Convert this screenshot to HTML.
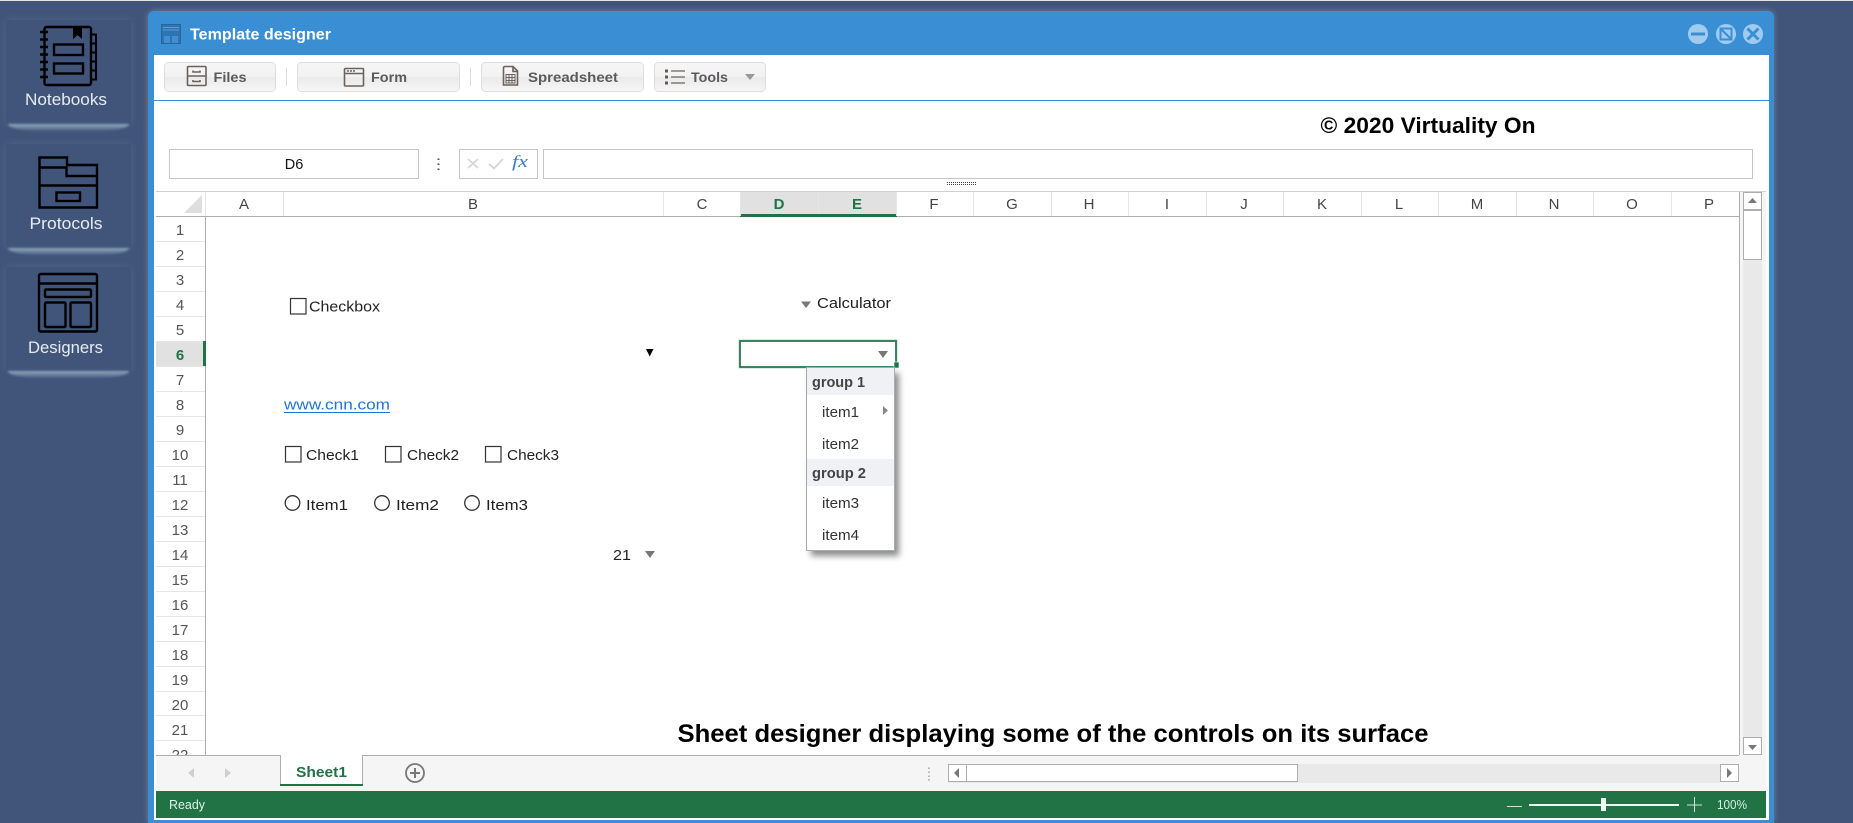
<!DOCTYPE html>
<html>
<head>
<meta charset="utf-8">
<title>Template designer</title>
<style>
html,body{margin:0;padding:0;width:1853px;height:823px;overflow:hidden;background:#41557b;font-family:"Liberation Sans",sans-serif}
.p{position:absolute;left:6px;width:125px;background:#41557b;box-shadow:0 0 8px rgba(190,210,225,.13)}
.g{position:absolute;left:8px;width:121px;height:7px;background:linear-gradient(#8eaabd,rgba(142,170,189,.1));border-radius:0 0 30px 30px/0 0 7px 7px;filter:blur(1px)}
.win{position:absolute;left:148px;top:11px;width:1626px;height:812px;background:#3a8fd4;border-radius:6px 6px 0 0;box-shadow:0 0 6px rgba(190,195,205,.4)}
.menu{position:absolute;left:807px;top:368px;width:88px;height:183px;box-shadow:4px 5px 6px rgba(0,0,0,.45)}
svg{position:absolute;left:0;top:0}
text{font-family:"Liberation Sans",sans-serif}
.side{font-size:16.5px;fill:#e6ebf0}
.col{font-size:15px;fill:#444;text-anchor:middle}
.row{font-size:15px;fill:#555;text-anchor:middle}
.btn{font-size:14px;font-weight:bold;fill:#5c5a5c}
.cell{font-size:15px;fill:#222}
.menuT{font-size:14.5px;fill:#333}
.menuG{font-size:14.5px;font-weight:bold;fill:#444}
.sep{fill:#e3e8e3}
.k{fill:none;stroke:#000;stroke-width:2.4}
.b{fill:none;stroke:#6b625c;stroke-width:1.6}
</style>
</head>
<body>
<div style="position:absolute;left:0;top:0;width:1853px;height:1px;background:#e4e4e4"></div>
<div class="p" style="top:20px;height:104px"></div>
<div class="g" style="top:124px"></div>
<div class="p" style="top:144px;height:104px"></div>
<div class="g" style="top:248px"></div>
<div class="p" style="top:267px;height:104px"></div>
<div class="g" style="top:371px"></div>
<div class="win"></div>
<svg width="1853" height="823" viewBox="0 0 1853 823" xmlns="http://www.w3.org/2000/svg">
<defs>
<linearGradient id="btn" x1="0" y1="0" x2="0" y2="1">
<stop offset="0" stop-color="#f6f6f6"/><stop offset=".5" stop-color="#f2f2f2"/><stop offset=".5" stop-color="#e9e9e9"/><stop offset="1" stop-color="#f7f7f7"/>
</linearGradient>
</defs>

<!-- sidebar icons -->
<g>
<rect class="k" x="44.500" y="27" width="46.500" height="58" rx="2"/>
<path d="M40 32h8M40 39.500h8M40 47h8M40 54.500h8M40 62h8M40 69.500h8M40 77h8" stroke="#000" stroke-width="2.600" fill="none"/>
<path d="M73 26h9v13l-4.500-4-4.500 4z" fill="#000"/>
<rect class="k" x="54" y="44.500" width="29" height="10.500"/>
<rect class="k" x="54" y="63.500" width="29" height="10"/>
<path d="M91 34.500h5v45h-5M91 43.500h5M91 52.500h5M91 61.500h5M91 70.500h5" fill="none" stroke="#000" stroke-width="2"/>
</g>
<g>
<path class="k" d="M39.500 157.500H67V165H97V207.500H39.500Z"/>
<path class="k" d="M39.500 167.500H66.500V176H97M39.500 185.500H97"/>
<rect class="k" x="56.500" y="192.500" width="23.500" height="8.500"/>
</g>
<g>
<rect class="k" x="39" y="274" width="58" height="57.500" rx="1.500"/>
<path class="k" d="M39 283.500H97"/>
<rect class="k" x="45" y="289.500" width="46" height="7.500" rx="1"/>
<rect class="k" x="45" y="302.500" width="20.500" height="24.500" rx="1"/>
<rect class="k" x="70.500" y="302.500" width="20.500" height="24.500" rx="1"/>
</g>
<text class="side" x="25" y="105" textLength="82" lengthAdjust="spacingAndGlyphs">Notebooks</text>
<text class="side" x="29.500" y="229" textLength="73" lengthAdjust="spacingAndGlyphs">Protocols</text>
<text class="side" x="28" y="353" textLength="75" lengthAdjust="spacingAndGlyphs">Designers</text>

<!-- window body -->
<rect x="154" y="55" width="1615" height="765" fill="#fff"/>

<!-- title -->
<rect x="161" y="24" width="20" height="20" fill="#2f74b2"/>
<rect x="161.500" y="24.500" width="19" height="19" fill="none" stroke="#2a659c"/>
<path d="M163 27.500h16M163 30h16" stroke="#5a9dd4" stroke-width="1"/>
<rect x="164" y="36" width="6" height="7" fill="#3f8fd2"/><rect x="172" y="36" width="6" height="7" fill="#3f8fd2"/>
<text x="190" y="39.500" font-size="16" font-weight="bold" fill="#fff" textLength="141" lengthAdjust="spacingAndGlyphs">Template designer</text>
<circle cx="1698" cy="34" r="10" fill="#a0cbef"/>
<rect x="1691" y="32.500" width="14" height="3" fill="#3a8fd4"/>
<circle cx="1726" cy="34" r="10" fill="#a0cbef"/>
<rect x="1720.500" y="28.500" width="11" height="11" fill="none" stroke="#3a8fd4" stroke-width="2"/>
<path d="M1720 28L1732 40" stroke="#3a8fd4" stroke-width="2"/>
<circle cx="1753" cy="34" r="10" fill="#a0cbef"/>
<path d="M1747.500 28.500L1758.500 39.500M1758.500 28.500L1747.500 39.500" stroke="#3a8fd4" stroke-width="3"/>

<!-- toolbar -->
<rect x="164.500" y="62.500" width="111" height="29" rx="4" fill="url(#btn)" stroke="#dedede"/>
<rect x="297.500" y="62.500" width="162" height="29" rx="4" fill="url(#btn)" stroke="#dedede"/>
<rect x="481.500" y="62.500" width="162" height="29" rx="4" fill="url(#btn)" stroke="#dedede"/>
<rect x="654.500" y="62.500" width="111" height="29" rx="4" fill="url(#btn)" stroke="#dedede"/>
<rect x="286" y="68" width="1" height="18" fill="#dcdcdc"/>
<rect x="470" y="68" width="1" height="18" fill="#dcdcdc"/>
<rect class="b" x="187.500" y="66.500" width="18.500" height="19" rx="1"/>
<path class="b" d="M187.500 76H206M193 70.500v1.500h7v-1.500M193 80v1.500h7V80"/>
<rect class="b" x="344.500" y="68.500" width="19" height="17.500" rx="1"/>
<path class="b" d="M344.500 73.500h19"/>
<path d="M347 71h2M350 71h2M353 71h2" stroke="#6b625c" stroke-width="1.500"/>
<path class="b" d="M503.500 68q0-1.500 1.500-1.500h8l4.500 4.500v14h-14z"/>
<path class="b" d="M513 66.500v5h4.500"/>
<path d="M506 74.500h9v8.500h-9zM506 77.500h9M506 80.500h9M509 74.500v8.500M512 74.500v8.500" fill="none" stroke="#6b625c" stroke-width="1"/>
<path d="M665 69.500h3v3h-3zM665 75.500h3v3h-3zM665 81.500h3v3h-3z" fill="#5f5c5a"/>
<path d="M671 71h14M671 77h14M671 83h14" stroke="#6b625c" stroke-width="1.300"/>
<text class="btn" x="213.500" y="82" textLength="33" lengthAdjust="spacingAndGlyphs">Files</text>
<text class="btn" x="371" y="82" textLength="36" lengthAdjust="spacingAndGlyphs">Form</text>
<text class="btn" x="528" y="82" textLength="90" lengthAdjust="spacingAndGlyphs">Spreadsheet</text>
<text class="btn" x="691" y="82" textLength="37" lengthAdjust="spacingAndGlyphs">Tools</text>
<path d="M745 74h10l-5 6z" fill="#999"/>
<rect x="154" y="100" width="1615" height="1" fill="#3a8fd4"/>

<!-- caption -->
<text x="1320.500" y="133" font-size="22" font-weight="bold" fill="#000" textLength="215" lengthAdjust="spacingAndGlyphs">© 2020 Virtuality On</text>

<!-- formula bar -->
<rect x="169.500" y="149.500" width="249" height="29" fill="#fff" stroke="#c6c6c6"/>
<text x="294" y="169" font-size="14.500" fill="#111" text-anchor="middle">D6</text>
<path d="M438.500 158.500v1.500M438.500 163.500v1.500M438.500 168.500v1.500" stroke="#555" stroke-width="2"/>
<rect x="459.500" y="149.500" width="78" height="29" fill="#fff" stroke="#c6c6c6"/>
<path d="M468 159L478 168M478 159L468 168" stroke="#d6d6d6" stroke-width="1.600"/>
<path d="M489 164L494 168.500L503 159" fill="none" stroke="#d6d6d6" stroke-width="1.800"/>
<text x="512" y="167" font-size="17" font-style="italic" fill="#3a80c8" style="font-family:'Liberation Serif',serif" textLength="16" lengthAdjust="spacingAndGlyphs">fx</text>
<rect x="543.500" y="149.500" width="1209" height="29" fill="#fff" stroke="#c6c6c6"/>
<path d="M947 182.500h29M947 184.500h29" stroke="#444" stroke-width="1" stroke-dasharray="1 1"/>

<!-- column headers -->
<rect x="156" y="191" width="1610" height="1" fill="#cfcfcf"/>
<rect x="740" y="192" width="157" height="23" fill="#e1e1e1"/>
<rect x="156" y="216" width="1583" height="1" fill="#adadad"/>
<rect x="740" y="214" width="157" height="3" fill="#217346"/>
<path d="M202 195V213H184Z" fill="#dedede"/>
<g class="sep">
<rect x="205" y="192" width="1" height="24"/><rect x="283" y="192" width="1" height="24"/><rect x="663" y="192" width="1" height="24"/><rect x="740" y="192" width="1" height="24"/><rect x="818" y="192" width="1" height="22"/><rect x="896" y="192" width="1" height="24"/><rect x="973" y="192" width="1" height="24"/><rect x="1051" y="192" width="1" height="24"/><rect x="1128" y="192" width="1" height="24"/><rect x="1206" y="192" width="1" height="24"/><rect x="1283" y="192" width="1" height="24"/><rect x="1361" y="192" width="1" height="24"/><rect x="1438" y="192" width="1" height="24"/><rect x="1516" y="192" width="1" height="24"/><rect x="1593" y="192" width="1" height="24"/><rect x="1671" y="192" width="1" height="24"/>
</g>
<text class="col" x="244" y="209">A</text><text class="col" x="473" y="209">B</text><text class="col" x="702" y="209">C</text>
<text class="col" x="779" y="209" style="fill:#217346;font-weight:bold">D</text><text class="col" x="857" y="209" style="fill:#217346;font-weight:bold">E</text>
<text class="col" x="934" y="209">F</text><text class="col" x="1012" y="209">G</text><text class="col" x="1089" y="209">H</text><text class="col" x="1167" y="209">I</text><text class="col" x="1244" y="209">J</text><text class="col" x="1322" y="209">K</text><text class="col" x="1399" y="209">L</text><text class="col" x="1477" y="209">M</text><text class="col" x="1554" y="209">N</text><text class="col" x="1632" y="209">O</text><text class="col" x="1709" y="209">P</text>

<!-- row headers -->
<rect x="156" y="341" width="49" height="25" fill="#e1e1e1"/>
<g class="sep">
<rect x="156" y="241" width="49" height="1"/><rect x="156" y="266" width="49" height="1"/><rect x="156" y="291" width="49" height="1"/><rect x="156" y="316" width="49" height="1"/><rect x="156" y="341" width="49" height="1"/><rect x="156" y="366" width="49" height="1"/><rect x="156" y="391" width="49" height="1"/><rect x="156" y="416" width="49" height="1"/><rect x="156" y="441" width="49" height="1"/><rect x="156" y="466" width="49" height="1"/><rect x="156" y="491" width="49" height="1"/><rect x="156" y="516" width="49" height="1"/><rect x="156" y="541" width="49" height="1"/><rect x="156" y="566" width="49" height="1"/><rect x="156" y="591" width="49" height="1"/><rect x="156" y="616" width="49" height="1"/><rect x="156" y="641" width="49" height="1"/><rect x="156" y="666" width="49" height="1"/><rect x="156" y="691" width="49" height="1"/><rect x="156" y="715" width="49" height="1"/><rect x="156" y="740" width="49" height="1"/>
</g>
<rect x="205" y="217" width="1" height="538" fill="#adadad"/>
<rect x="203" y="341" width="3" height="25" fill="#217346"/>
<text class="row" x="180" y="235">1</text><text class="row" x="180" y="260">2</text><text class="row" x="180" y="285">3</text><text class="row" x="180" y="310">4</text><text class="row" x="180" y="335">5</text>
<text class="row" x="180" y="360" style="fill:#217346;font-weight:bold">6</text>
<text class="row" x="180" y="385">7</text><text class="row" x="180" y="410">8</text><text class="row" x="180" y="435">9</text><text class="row" x="180" y="460">10</text><text class="row" x="180" y="485">11</text><text class="row" x="180" y="510">12</text><text class="row" x="180" y="535">13</text><text class="row" x="180" y="560">14</text><text class="row" x="180" y="585">15</text><text class="row" x="180" y="610">16</text><text class="row" x="180" y="635">17</text><text class="row" x="180" y="660">18</text><text class="row" x="180" y="685">19</text><text class="row" x="180" y="710">20</text><text class="row" x="180" y="735">21</text>
<svg x="156" y="741" width="49" height="14"><text class="row" x="24" y="19">22</text></svg>

<!-- vertical scrollbar -->
<rect x="1739" y="192" width="1" height="564" fill="#adadad"/>
<rect x="1740" y="192" width="26" height="563" fill="#f5f5f5"/>
<rect x="1743" y="192" width="19" height="563" fill="#e9e9e9"/>
<rect x="1743.500" y="192.500" width="18" height="17" fill="#fff" stroke="#adadad"/>
<path d="M1748 203h9l-4.500-5z" fill="#777"/>
<rect x="1743.500" y="210.500" width="18" height="49" fill="#fff" stroke="#adadad"/>
<rect x="1743.500" y="737.500" width="18" height="17" fill="#fff" stroke="#adadad"/>
<path d="M1748 745h9l-4.500 5z" fill="#777"/>

<!-- cell contents -->
<rect x="290.500" y="298.500" width="15.500" height="15.500" fill="#fff" stroke="#333" stroke-width="1.200"/>
<text class="cell" x="309" y="311.500" textLength="71" lengthAdjust="spacingAndGlyphs">Checkbox</text>
<path d="M801 301.500h10l-5 6.500z" fill="#777"/>
<text class="cell" x="817" y="308" textLength="74" lengthAdjust="spacingAndGlyphs">Calculator</text>
<path d="M646 349h7.500l-3.750 7.500z" fill="#000"/>

<text x="284" y="409.500" font-size="15" fill="#1f74d6" textLength="106" lengthAdjust="spacingAndGlyphs">www.cnn.com</text>
<rect x="284" y="412" width="106" height="1" fill="#1f74d6"/>

<rect x="285.500" y="446.500" width="15.500" height="15.500" fill="#fff" stroke="#333" stroke-width="1.200"/>
<text class="cell" x="306" y="460" textLength="53" lengthAdjust="spacingAndGlyphs">Check1</text>
<rect x="385.500" y="446.500" width="15.500" height="15.500" fill="#fff" stroke="#333" stroke-width="1.200"/>
<text class="cell" x="407" y="460" textLength="52" lengthAdjust="spacingAndGlyphs">Check2</text>
<rect x="485.500" y="446.500" width="15.500" height="15.500" fill="#fff" stroke="#333" stroke-width="1.200"/>
<text class="cell" x="507" y="460" textLength="52" lengthAdjust="spacingAndGlyphs">Check3</text>

<circle cx="292.500" cy="503" r="7.300" fill="#fff" stroke="#333" stroke-width="1.300"/>
<text class="cell" x="306" y="510" textLength="42" lengthAdjust="spacingAndGlyphs">Item1</text>
<circle cx="382" cy="503" r="7.300" fill="#fff" stroke="#333" stroke-width="1.300"/>
<text class="cell" x="396" y="510" textLength="43" lengthAdjust="spacingAndGlyphs">Item2</text>
<circle cx="472" cy="503" r="7.300" fill="#fff" stroke="#333" stroke-width="1.300"/>
<text class="cell" x="486" y="510" textLength="42" lengthAdjust="spacingAndGlyphs">Item3</text>

<text class="cell" x="613" y="560" textLength="18" lengthAdjust="spacingAndGlyphs">21</text>
<path d="M645 551h10l-5 7z" fill="#777"/>

<!-- selected cell -->
<rect x="739" y="340" width="158" height="28" fill="none" stroke="#bcd6c7" stroke-width="1"/>
<rect x="740" y="341" width="156" height="26" fill="#fff" stroke="#2a7a50" stroke-width="1.800"/>
<path d="M878 351h10l-5 7z" fill="#777"/>
<rect x="894" y="362" width="5" height="6" fill="#217346" stroke="#fff" stroke-width=".6"/>

<!-- dropdown menu -->
<rect x="806.500" y="367.500" width="88" height="183" fill="#fff" stroke="#a9acb4"/>
<rect x="807" y="368" width="87" height="27" fill="#f0f1f5"/>
<rect x="807" y="459" width="87" height="27" fill="#f0f1f5"/>
<text class="menuG" x="812" y="387" textLength="53" lengthAdjust="spacingAndGlyphs">group 1</text>
<text class="menuT" x="822" y="417" textLength="37" lengthAdjust="spacingAndGlyphs">item1</text>
<path d="M883 406l5 4.500-5 4.500z" fill="#888"/>
<text class="menuT" x="822" y="449" textLength="37" lengthAdjust="spacingAndGlyphs">item2</text>
<text class="menuG" x="812" y="478" textLength="54" lengthAdjust="spacingAndGlyphs">group 2</text>
<text class="menuT" x="822" y="508" textLength="37" lengthAdjust="spacingAndGlyphs">item3</text>
<text class="menuT" x="822" y="540" textLength="37" lengthAdjust="spacingAndGlyphs">item4</text>

<text x="677.500" y="742" font-size="25" font-weight="bold" fill="#000" textLength="751" lengthAdjust="spacingAndGlyphs">Sheet designer displaying some of the controls on its surface</text>

<!-- tab bar -->
<rect x="156" y="755" width="1610" height="36" fill="#f5f5f5"/>
<rect x="156" y="755" width="1583" height="1" fill="#adadad"/>
<rect x="280" y="755" width="83" height="31" fill="#fff"/>
<rect x="280" y="755" width="1" height="31" fill="#adadad"/>
<rect x="362" y="755" width="1" height="31" fill="#adadad"/>
<rect x="280" y="784" width="83" height="2" fill="#217346"/>
<text x="296" y="777" font-size="15" font-weight="bold" fill="#217346" textLength="51" lengthAdjust="spacingAndGlyphs">Sheet1</text>
<path d="M194 768v10l-6-5z" fill="#cfcfcf"/>
<path d="M225 768v10l6-5z" fill="#cfcfcf"/>
<circle cx="415" cy="773" r="9" fill="none" stroke="#777" stroke-width="1.800"/>
<path d="M410 773h10M415 768v10" stroke="#777" stroke-width="2"/>
<path d="M929 767.500v1.500M929 771.500v1.500M929 775.500v1.500M929 779v1.500" stroke="#b5b5b5" stroke-width="2"/>
<rect x="948" y="764" width="772" height="19" fill="#e9e9e9"/>
<rect x="948.500" y="764.500" width="18" height="17" fill="#fff" stroke="#adadad"/>
<path d="M959 768v10l-5-5z" fill="#777"/>
<rect x="966.500" y="764.500" width="331" height="17" fill="#fff" stroke="#adadad"/>
<rect x="1720.500" y="764.500" width="18" height="17" fill="#fff" stroke="#adadad"/>
<path d="M1727 768v10l5-5z" fill="#777"/>

<!-- status bar -->
<rect x="156" y="791" width="1610" height="27" fill="#217346"/>
<text x="169" y="809" font-size="13" fill="#dcf3ea" textLength="36" lengthAdjust="spacingAndGlyphs">Ready</text>
<rect x="1507" y="806" width="15" height="1" fill="#cfe3d8"/>
<rect x="1529" y="804" width="150" height="2" fill="#eef6f1"/>
<rect x="1601" y="798" width="5" height="13" fill="#f2f8f4"/>
<path d="M1687 805h15M1694.500 797v15" stroke="#cfe3d8" stroke-width="1"/>
<text x="1717" y="809" font-size="13" fill="#d6eee3" textLength="30" lengthAdjust="spacingAndGlyphs">100%</text>
</svg>
<div class="menu"></div>
</body>
</html>
